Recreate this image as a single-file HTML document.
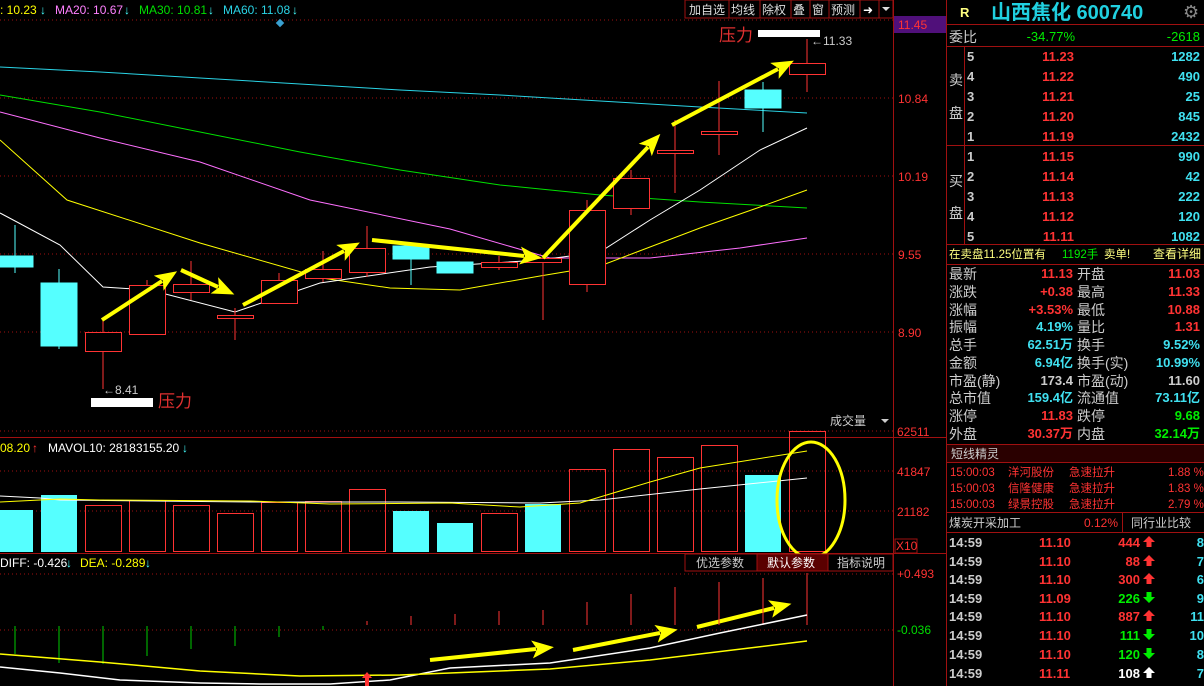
<!DOCTYPE html>
<html><head><meta charset="utf-8"><style>
html,body{margin:0;padding:0;background:#000;width:1204px;height:686px;overflow:hidden}
svg{display:block}
text{font-family:"Liberation Sans","Noto Sans CJK SC",sans-serif}
</style></head><body>
<svg width="1204" height="686" viewBox="0 0 1204 686" xmlns="http://www.w3.org/2000/svg">
<defs>
<marker id="ah" markerUnits="userSpaceOnUse" markerWidth="22" markerHeight="18" refX="4" refY="9" orient="auto">
<path d="M0,0 L22,9 L0,18 L5,9 Z" fill="#ffff00"/>
</marker>
</defs>
<rect width="1204" height="686" fill="#000"/>
<!-- grid dotted -->
<g stroke="#a01010" stroke-width="1" stroke-dasharray="1,3">
<line x1="0" y1="20" x2="893" y2="20"/>
<line x1="0" y1="98" x2="893" y2="98"/>
<line x1="0" y1="176" x2="893" y2="176"/>
<line x1="0" y1="254" x2="893" y2="254"/>
<line x1="0" y1="332" x2="893" y2="332"/>
<line x1="0" y1="431" x2="893" y2="431"/>
<line x1="0" y1="471" x2="893" y2="471"/>
<line x1="0" y1="511" x2="893" y2="511"/>
<line x1="0" y1="574" x2="893" y2="574"/>
<line x1="0" y1="630" x2="893" y2="630"/>
</g>
<g stroke="#a01010" stroke-width="1">
<line x1="893.5" y1="0" x2="893.5" y2="686"/>
<line x1="0" y1="437.5" x2="946" y2="437.5"/>
<line x1="0" y1="553.5" x2="946" y2="553.5"/>
<line x1="946.5" y1="0" x2="946.5" y2="686"/>
</g>
<!-- header legend -->
<text x="0" y="14" font-size="12" fill="#ffff00">: 10.23</text><text x="40" y="14" font-size="12" fill="#4ff">↓</text>
<text x="55" y="14" font-size="12" fill="#ff80ff">MA20: 10.67</text><text x="124" y="14" font-size="12" fill="#4ff">↓</text>
<text x="139" y="14" font-size="12" fill="#00e000">MA30: 10.81</text><text x="208" y="14" font-size="12" fill="#4ff">↓</text>
<text x="223" y="14" font-size="12" fill="#2ad4e6">MA60: 11.08</text><text x="292" y="14" font-size="12" fill="#4ff">↓</text>
<rect x="277" y="20" width="6" height="6" fill="#3aa0d0" transform="rotate(45 280 23)"/>
<!-- toolbar -->
<g font-size="12" fill="#ddd">
<rect x="685" y="0" width="208" height="18" fill="#000" stroke="#a01010"/>
<text x="689" y="14">加自选</text><text x="731" y="14">均线</text><text x="762" y="14">除权</text><text x="793" y="14">叠</text><text x="812" y="14">窗</text><text x="831" y="14">预测</text>
<g stroke="#a01010"><line x1="729" y1="0" x2="729" y2="18"/><line x1="760" y1="0" x2="760" y2="18"/><line x1="791" y1="0" x2="791" y2="18"/><line x1="810" y1="0" x2="810" y2="18"/><line x1="829" y1="0" x2="829" y2="18"/><line x1="860" y1="0" x2="860" y2="18"/><line x1="879" y1="0" x2="879" y2="18"/></g>
<text x="863" y="14" fill="#fff">➜</text><path d="M882,7 L890,7 L886,11Z" fill="#ddd"/>
</g>
<!-- axis labels -->
<rect x="894" y="16" width="52" height="17" fill="#50107a"/>
<g font-size="12" fill="#ff3333">
<text x="898" y="29">11.45</text><text x="898" y="103">10.84</text><text x="898" y="181">10.19</text><text x="898" y="259">9.55</text><text x="898" y="337">8.90</text>
<text x="897" y="436">62511</text><text x="897" y="476">41847</text><text x="897" y="516">21182</text>
<text x="897" y="578">+0.493</text>
</g>
<rect x="895" y="539" width="22" height="14" fill="none" stroke="#a01010"/>
<text x="896" y="550" font-size="12" fill="#ff3333">X10</text>
<text x="897" y="634" font-size="12" fill="#00dd00">-0.036</text>
<!-- MA lines -->
<g fill="none" stroke-width="1">
<polyline stroke="#2ad4e6" points="0,67 100,72 200,78 300,84 400,90 500,95 600,101 700,107 807,113"/>
<polyline stroke="#00e000" points="0,95 100,112 200,132 300,152 400,170 500,185 600,195 700,202 807,208"/>
<polyline stroke="#ff70ff" points="0,112 100,138 200,162 310,200 450,229 550,258 650,258 740,248 807,238"/>
<polyline stroke="#ffff00" points="0,140 67,200 200,243 322,278 390,288 460,290 540,276 600,266 700,228 760,207 807,190"/>
<polyline stroke="#ffffff" points="0,213 17,222 60,245 103,287 150,290 235,312 320,283 430,267 540,260 600,252 650,220 700,190 760,150 807,128"/>
</g>
<!-- candles -->
<g stroke-width="1">
<g stroke="#55ffff" fill="#55ffff">
<line x1="15" y1="225" x2="15" y2="273"/><rect x="0" y="256" width="33" height="11"/>
<line x1="59" y1="269" x2="59" y2="349"/><rect x="41" y="283" width="36" height="63"/>
<line x1="411" y1="246" x2="411" y2="285"/><rect x="393" y="246" width="36" height="13"/>
<line x1="455" y1="262" x2="455" y2="273"/><rect x="437" y="262" width="36" height="11"/>
<line x1="763" y1="82" x2="763" y2="132"/><rect x="745" y="90" width="36" height="18"/>
</g>
<g stroke="#ff3333" fill="#000">
<line x1="103" y1="321" x2="103" y2="389"/><rect x="85.5" y="332.5" width="36" height="19"/>
<line x1="147" y1="280" x2="147" y2="334"/><rect x="129.5" y="285.5" width="36" height="49"/>
<line x1="191" y1="261" x2="191" y2="300"/><rect x="173.5" y="284.5" width="36" height="8"/>
<line x1="235" y1="308" x2="235" y2="340"/><rect x="217.5" y="315.5" width="36" height="3"/>
<line x1="279" y1="273" x2="279" y2="303"/><rect x="261.5" y="280.5" width="36" height="23"/>
<line x1="323" y1="251" x2="323" y2="282"/><rect x="305.5" y="269.5" width="36" height="9"/>
<line x1="367" y1="226" x2="367" y2="277"/><rect x="349.5" y="248.5" width="36" height="24"/>
<line x1="499" y1="256" x2="499" y2="270"/><rect x="481.5" y="262.5" width="36" height="5"/>
<line x1="543" y1="255" x2="543" y2="320"/><rect x="525.5" y="258.5" width="36" height="4"/>
<line x1="587" y1="200" x2="587" y2="292"/><rect x="569.5" y="210.5" width="36" height="74"/>
<line x1="631" y1="170" x2="631" y2="215"/><rect x="613.5" y="178.5" width="36" height="30"/>
<line x1="675" y1="120" x2="675" y2="193"/><rect x="657.5" y="150.5" width="36" height="3"/>
<line x1="719" y1="81" x2="719" y2="155"/><rect x="701.5" y="131.5" width="36" height="3"/>
<line x1="807" y1="39" x2="807" y2="92"/><rect x="789.5" y="63.5" width="36" height="11"/>
</g>
</g>
<!-- annotations -->
<text x="719" y="41" font-size="17" fill="#e03030">压力</text>
<rect x="758" y="30" width="62" height="7" fill="#fff"/>
<text x="811" y="45" font-size="12" fill="#ccc">←11.33</text>
<text x="103" y="394" font-size="12" fill="#ccc">←8.41</text>
<rect x="91" y="398" width="62" height="9" fill="#fff"/>
<text x="158" y="407" font-size="17" fill="#e03030">压力</text>
<!-- arrows -->
<g stroke="#ffff00" stroke-width="4" fill="none" marker-end="url(#ah)">
<line x1="102" y1="320" x2="162" y2="281"/>
<line x1="181" y1="270" x2="218" y2="287"/>
<line x1="243" y1="305" x2="344" y2="251"/>
<line x1="372" y1="240" x2="524" y2="256"/>
<line x1="543" y1="258" x2="648" y2="147"/>
<line x1="672" y1="125" x2="778" y2="69"/>
<line x1="430" y1="660" x2="536" y2="649"/>
<line x1="573" y1="650" x2="660" y2="633"/>
<line x1="697" y1="627" x2="774" y2="608"/>
</g>
<!-- volume header -->
<text x="0" y="452" font-size="12" fill="#ffff00">08.20</text><text x="32" y="452" font-size="12" fill="#ff3333">↑</text>
<text x="48" y="452" font-size="12" fill="#fff">MAVOL10: 28183155.20</text><text x="182" y="452" font-size="12" fill="#4ff">↓</text>
<text x="830" y="425" font-size="12" fill="#ccc">成交量</text><path d="M881,419 L889,419 L885,423Z" fill="#ccc"/>
<!-- volume bars -->
<g fill="#55ffff">
<rect x="0" y="510" width="33" height="42"/><rect x="41" y="495" width="36" height="57"/>
<rect x="393" y="511" width="36" height="41"/><rect x="437" y="523" width="36" height="29"/>
<rect x="525" y="504" width="36" height="48"/><rect x="745" y="475" width="36" height="77"/>
</g>
<g fill="none" stroke="#ff3333">
<rect x="85.5" y="505.5" width="36" height="46"/><rect x="129.5" y="500.5" width="36" height="51"/>
<rect x="173.5" y="505.5" width="36" height="46"/><rect x="217.5" y="513.5" width="36" height="38"/>
<rect x="261.5" y="502.5" width="36" height="49"/><rect x="305.5" y="501.5" width="36" height="50"/>
<rect x="349.5" y="489.5" width="36" height="62"/><rect x="481.5" y="513.5" width="36" height="38"/>
<rect x="569.5" y="469.5" width="36" height="82"/><rect x="613.5" y="449.5" width="36" height="102"/>
<rect x="657.5" y="457.5" width="36" height="94"/><rect x="701.5" y="445.5" width="36" height="106"/>
<rect x="789.5" y="431.5" width="36" height="120"/>
</g>
<g fill="none">
<polyline stroke="#fff" points="0,496 40,498 60,500 250,502 400,502 540,503 600,500 700,489 807,478"/>
<polyline stroke="#ff0" points="0,502 60,499 100,500 250,501 330,504 450,503 520,507 580,503 650,482 700,468 807,451"/>
</g>
<ellipse cx="811" cy="500" rx="34" ry="58" fill="none" stroke="#ffff00" stroke-width="3"/>
<!-- MACD header -->
<text x="0" y="567" font-size="12" fill="#fff">DIFF: -0.426</text><text x="66" y="567" font-size="12" fill="#4ff">↓</text>
<text x="80" y="567" font-size="12" fill="#ff0">DEA: -0.289</text><text x="145" y="567" font-size="12" fill="#4ff">↓</text>
<rect x="685" y="554" width="72" height="17" fill="#000" stroke="#a01010"/>
<rect x="757" y="554" width="71" height="17" fill="#5a0000" stroke="#a01010"/>
<rect x="828" y="554" width="65" height="17" fill="#000" stroke="#a01010"/>
<text x="696" y="567" font-size="12" fill="#ccc">优选参数</text>
<text x="767" y="567" font-size="12" fill="#fff">默认参数</text>
<text x="837" y="567" font-size="12" fill="#ccc">指标说明</text>
<!-- MACD hist -->
<g stroke="#00cc00">
<line x1="15" y1="626" x2="15" y2="654"/><line x1="59" y1="626" x2="59" y2="663"/><line x1="103" y1="626" x2="103" y2="664"/><line x1="147" y1="626" x2="147" y2="656"/><line x1="191" y1="626" x2="191" y2="649"/><line x1="235" y1="626" x2="235" y2="646"/><line x1="279" y1="626" x2="279" y2="637"/><line x1="323" y1="626" x2="323" y2="630"/>
</g>
<g stroke="#ff3333">
<line x1="367" y1="621" x2="367" y2="625"/><line x1="411" y1="616" x2="411" y2="625"/><line x1="455" y1="614" x2="455" y2="625"/><line x1="499" y1="611" x2="499" y2="625"/><line x1="543" y1="610" x2="543" y2="625"/><line x1="587" y1="602" x2="587" y2="625"/><line x1="631" y1="594" x2="631" y2="625"/><line x1="675" y1="587" x2="675" y2="625"/><line x1="719" y1="582" x2="719" y2="625"/><line x1="763" y1="578" x2="763" y2="625"/><line x1="807" y1="573" x2="807" y2="625"/>
</g>
<g fill="none" stroke-width="1.5">
<polyline stroke="#fff" points="0,667 60,673 120,680 200,683 260,684 330,684 390,680 450,668 550,663 650,648 720,633 807,615"/>
<polyline stroke="#ff0" points="0,654 100,662 200,671 300,676 400,675 450,673 550,669 650,660 807,641"/>
</g>
<path d="M367,672 L372,678 L369,678 L369,686 L365,686 L365,678 L362,678Z" fill="#ff3333"/>
<!-- RIGHT PANEL -->
<g stroke="#a01010" stroke-width="1">
<line x1="946" y1="24.5" x2="1204" y2="24.5"/>
<line x1="946" y1="46.5" x2="1204" y2="46.5"/>
<line x1="946" y1="145.5" x2="1204" y2="145.5"/>
<line x1="946" y1="244.5" x2="1204" y2="244.5"/>
<line x1="946" y1="264.5" x2="1204" y2="264.5"/>
<line x1="946" y1="444.5" x2="1204" y2="444.5"/>
<line x1="946" y1="462.5" x2="1204" y2="462.5"/>
<line x1="946" y1="512.5" x2="1204" y2="512.5"/>
<line x1="946" y1="532.5" x2="1204" y2="532.5"/>
<line x1="964.5" y1="46" x2="964.5" y2="244"/>
<line x1="1122.5" y1="513" x2="1122.5" y2="532"/>
</g>
<rect x="947" y="445" width="257" height="17" fill="#2a0000"/>
<text x="960" y="17" font-size="13" fill="#ffff80" font-weight="bold">R</text>
<text x="991" y="19" font-size="20" fill="#20d0e0" font-weight="bold">山西焦化 600740</text>
<text x="1183" y="18" font-size="18" fill="#888">⚙</text>
<g font-size="14">
<text x="949" y="42" fill="#ccc">委比</text>
<text x="1075" y="41" fill="#00ee00" text-anchor="end" font-size="13">-34.77%</text>
<text x="1200" y="41" fill="#00ee00" text-anchor="end" font-size="13">-2618</text>
<text x="949" y="85" fill="#ccc">卖</text><text x="949" y="118" fill="#ccc">盘</text>
<text x="949" y="186" fill="#ccc">买</text><text x="949" y="218" fill="#ccc">盘</text>
</g>
<g font-size="13" font-weight="bold">
<g fill="#ccc"><text x="967" y="61">5</text><text x="967" y="81">4</text><text x="967" y="101">3</text><text x="967" y="121">2</text><text x="967" y="141">1</text>
<text x="967" y="161">1</text><text x="967" y="181">2</text><text x="967" y="201">3</text><text x="967" y="221">4</text><text x="967" y="241">5</text></g>
<g fill="#ff3333" text-anchor="end"><text x="1074" y="61">11.23</text><text x="1074" y="81">11.22</text><text x="1074" y="101">11.21</text><text x="1074" y="121">11.20</text><text x="1074" y="141">11.19</text>
<text x="1074" y="161">11.15</text><text x="1074" y="181">11.14</text><text x="1074" y="201">11.13</text><text x="1074" y="221">11.12</text><text x="1074" y="241">11.11</text></g>
<g fill="#40e0f0" text-anchor="end"><text x="1200" y="61">1282</text><text x="1200" y="81">490</text><text x="1200" y="101">25</text><text x="1200" y="121">845</text><text x="1200" y="141">2432</text>
<text x="1200" y="161">990</text><text x="1200" y="181">42</text><text x="1200" y="201">222</text><text x="1200" y="221">120</text><text x="1200" y="241">1082</text></g>
</g>
<text x="949" y="258" font-size="11.5" fill="#ffff80">在卖盘11.25位置有</text>
<text x="1062" y="258" font-size="11.5" fill="#00ee00">1192手</text>
<text x="1104" y="258" font-size="11.5" fill="#ffff80">卖单!</text>
<text x="1153" y="258" font-size="12" fill="#ffff80">查看详细</text>
<g font-size="14" fill="#ccc">
<text x="949" y="279">最新</text><text x="949" y="297">涨跌</text><text x="949" y="315">涨幅</text><text x="949" y="332">振幅</text><text x="949" y="350">总手</text><text x="949" y="368">金额</text><text x="949" y="386">市盈(静)</text><text x="949" y="403">总市值</text><text x="949" y="421">涨停</text><text x="949" y="439">外盘</text>
<text x="1077" y="279">开盘</text><text x="1077" y="297">最高</text><text x="1077" y="315">最低</text><text x="1077" y="332">量比</text><text x="1077" y="350">换手</text><text x="1077" y="368">换手(实)</text><text x="1077" y="386">市盈(动)</text><text x="1077" y="403">流通值</text><text x="1077" y="421">跌停</text><text x="1077" y="439">内盘</text>
</g>
<g font-size="13" font-weight="bold" text-anchor="end">
<text x="1073" y="278" fill="#ff3333">11.13</text><text x="1073" y="296" fill="#ff3333">+0.38</text><text x="1073" y="314" fill="#ff3333">+3.53%</text><text x="1073" y="331" fill="#40e0f0">4.19%</text><text x="1073" y="349" fill="#40e0f0">62.51万</text><text x="1073" y="367" fill="#40e0f0">6.94亿</text><text x="1073" y="385" fill="#ccc">173.4</text><text x="1073" y="402" fill="#40e0f0">159.4亿</text><text x="1073" y="420" fill="#ff3333">11.83</text><text x="1073" y="438" fill="#ff3333">30.37万</text>
<text x="1200" y="278" fill="#ff3333">11.03</text><text x="1200" y="296" fill="#ff3333">11.33</text><text x="1200" y="314" fill="#ff3333">10.88</text><text x="1200" y="331" fill="#ff3333">1.31</text><text x="1200" y="349" fill="#40e0f0">9.52%</text><text x="1200" y="367" fill="#40e0f0">10.99%</text><text x="1200" y="385" fill="#ccc">11.60</text><text x="1200" y="402" fill="#40e0f0">73.11亿</text><text x="1200" y="420" fill="#00ee00">9.68</text><text x="1200" y="438" fill="#00ee00">32.14万</text>
</g>
<text x="951" y="458" font-size="12" fill="#ccc">短线精灵</text>
<g font-size="11.5" fill="#ff3333">
<text x="950" y="476">15:00:03</text><text x="1008" y="476">洋河股份</text><text x="1069" y="476">急速拉升</text><text x="1168" y="476">1.88 %</text>
<text x="950" y="492">15:00:03</text><text x="1008" y="492">信隆健康</text><text x="1069" y="492">急速拉升</text><text x="1168" y="492">1.83 %</text>
<text x="950" y="508">15:00:03</text><text x="1008" y="508">绿景控股</text><text x="1069" y="508">急速拉升</text><text x="1168" y="508">2.79 %</text>
</g>
<text x="949" y="527" font-size="12" fill="#ccc">煤炭开采加工</text>
<text x="1118" y="527" font-size="12" fill="#ff3333" text-anchor="end">0.12%</text>
<text x="1131" y="527" font-size="12" fill="#ccc">同行业比较</text>
<g font-size="13" font-weight="bold">
<g fill="#ccc"><text x="949" y="547">14:59</text><text x="949" y="566">14:59</text><text x="949" y="584">14:59</text><text x="949" y="603">14:59</text><text x="949" y="621">14:59</text><text x="949" y="640">14:59</text><text x="949" y="659">14:59</text><text x="949" y="678">14:59</text></g>
<g fill="#ff3333"><text x="1039" y="547">11.10</text><text x="1039" y="566">11.10</text><text x="1039" y="584">11.10</text><text x="1039" y="603">11.09</text><text x="1039" y="621">11.10</text><text x="1039" y="640">11.10</text><text x="1039" y="659">11.10</text><text x="1039" y="678">11.11</text></g>
<g text-anchor="end"><text x="1140" y="547" fill="#ff3333">444</text><text x="1140" y="566" fill="#ff3333">88</text><text x="1140" y="584" fill="#ff3333">300</text><text x="1140" y="603" fill="#00ee00">226</text><text x="1140" y="621" fill="#ff3333">887</text><text x="1140" y="640" fill="#00ee00">111</text><text x="1140" y="659" fill="#00ee00">120</text><text x="1140" y="678" fill="#fff">108</text></g>
<g fill="#40e0f0" text-anchor="end"><text x="1204" y="547">8</text><text x="1204" y="566">7</text><text x="1204" y="584">6</text><text x="1204" y="603">9</text><text x="1204" y="621">11</text><text x="1204" y="640">10</text><text x="1204" y="659">8</text><text x="1204" y="678">7</text></g>
</g>
<g>
<path d="M1149,536 l6,6 h-3.5 v5 h-5 v-5 h-3.5Z" fill="#ff3333"/>
<path d="M1149,555 l6,6 h-3.5 v5 h-5 v-5 h-3.5Z" fill="#ff3333"/>
<path d="M1149,573 l6,6 h-3.5 v5 h-5 v-5 h-3.5Z" fill="#ff3333"/>
<path d="M1149,603 l6,-6 h-3.5 v-5 h-5 v5 h-3.5Z" fill="#00ee00"/>
<path d="M1149,610 l6,6 h-3.5 v5 h-5 v-5 h-3.5Z" fill="#ff3333"/>
<path d="M1149,640 l6,-6 h-3.5 v-5 h-5 v5 h-3.5Z" fill="#00ee00"/>
<path d="M1149,659 l6,-6 h-3.5 v-5 h-5 v5 h-3.5Z" fill="#00ee00"/>
<path d="M1149,667 l6,6 h-3.5 v5 h-5 v-5 h-3.5Z" fill="#fff"/>
</g>
</svg>
</body></html>
